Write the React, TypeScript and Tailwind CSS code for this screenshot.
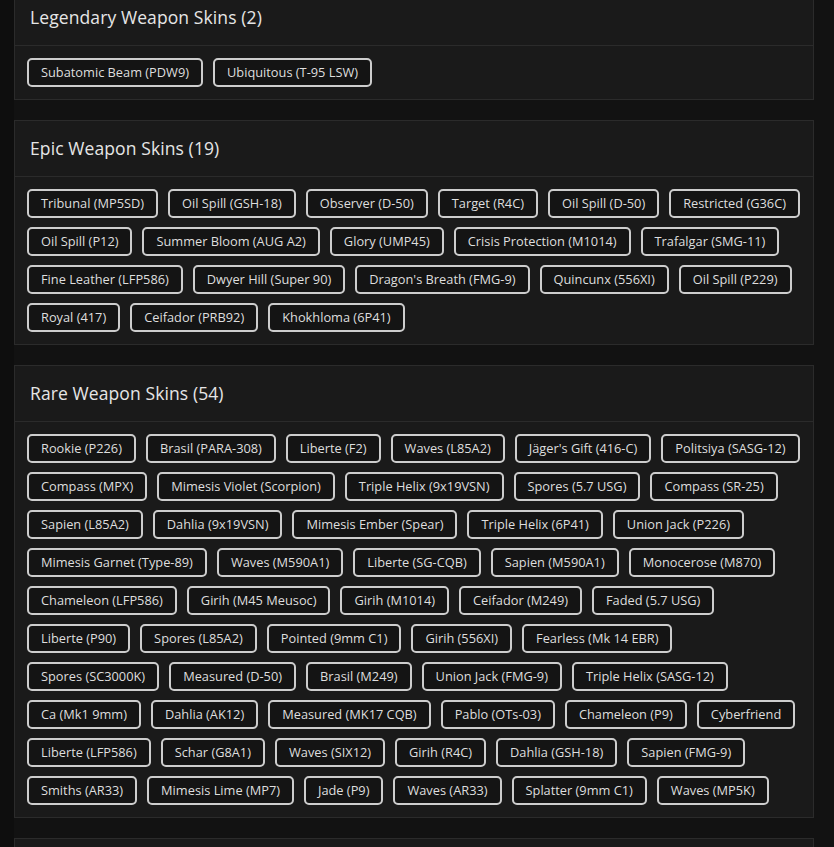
import React from "react";

const legendary = [["Subatomic Beam (PDW9)", "Ubiquitous (T-95 LSW)"]];
const epic = [
  ["Tribunal (MP5SD)", "Oil Spill (GSH-18)", "Observer (D-50)", "Target (R4C)", "Oil Spill (D-50)", "Restricted (G36C)"],
  ["Oil Spill (P12)", "Summer Bloom (AUG A2)", "Glory (UMP45)", "Crisis Protection (M1014)", "Trafalgar (SMG-11)"],
  ["Fine Leather (LFP586)", "Dwyer Hill (Super 90)", "Dragon's Breath (FMG-9)", "Quincunx (556XI)", "Oil Spill (P229)"],
  ["Royal (417)", "Ceifador (PRB92)", "Khokhloma (6P41)"],
];
const rare = [
  ["Rookie (P226)", "Brasil (PARA-308)", "Liberte (F2)", "Waves (L85A2)", "Jäger's Gift (416-C)", "Politsiya (SASG-12)"],
  ["Compass (MPX)", "Mimesis Violet (Scorpion)", "Triple Helix (9x19VSN)", "Spores (5.7 USG)", "Compass (SR-25)"],
  ["Sapien (L85A2)", "Dahlia (9x19VSN)", "Mimesis Ember (Spear)", "Triple Helix (6P41)", "Union Jack (P226)"],
  ["Mimesis Garnet (Type-89)", "Waves (M590A1)", "Liberte (SG-CQB)", "Sapien (M590A1)", "Monocerose (M870)"],
  ["Chameleon (LFP586)", "Girih (M45 Meusoc)", "Girih (M1014)", "Ceifador (M249)", "Faded (5.7 USG)"],
  ["Liberte (P90)", "Spores (L85A2)", "Pointed (9mm C1)", "Girih (556XI)", "Fearless (Mk 14 EBR)"],
  ["Spores (SC3000K)", "Measured (D-50)", "Brasil (M249)", "Union Jack (FMG-9)", "Triple Helix (SASG-12)"],
  ["Ca (Mk1 9mm)", "Dahlia (AK12)", "Measured (MK17 CQB)", "Pablo (OTs-03)", "Chameleon (P9)", "Cyberfriend"],
  ["Liberte (LFP586)", "Schar (G8A1)", "Waves (SIX12)", "Girih (R4C)", "Dahlia (GSH-18)", "Sapien (FMG-9)"],
  ["Smiths (AR33)", "Mimesis Lime (MP7)", "Jade (P9)", "Waves (AR33)", "Splatter (9mm C1)", "Waves (MP5K)"],
];

function Card({ title, rows }: { title: string; rows: string[][] }) {
  return (
    <section className="border border-[#2b2b2b] bg-[#1a1a1a]">
      <div className="flex h-[56px] items-center border-b border-[#2b2b2b] px-[15px]">
        <h2 className="text-[17.5px] font-medium tracking-[0.1px] text-[#e6e6e6]">{title}</h2>
      </div>
      <div className="flex flex-col gap-[9px] p-3">
        {rows.map((row, i) => (
          <div key={i} className="flex gap-[10px]">
            {row.map((s) => (
              <span
                key={s}
                className="flex h-[29px] items-center whitespace-nowrap rounded-[5px] border-2 border-[#cdcdcd] bg-[#141414] px-3 text-[12.8px] text-[#dedede]"
              >
                {s}
              </span>
            ))}
          </div>
        ))}
      </div>
    </section>
  );
}

export default function App() {
  return (
    <div
      className="h-[847px] overflow-hidden bg-[linear-gradient(to_right,#0e0e0e_14px,#121212_14px)]"
      style={{ fontFamily: '"Open Sans", "Noto Sans", sans-serif' }}
    >
      <div className="-mt-[11px] ml-[14px] flex w-[800px] flex-col gap-[20px]">
        <Card title="Legendary Weapon Skins (2)" rows={legendary} />
        <Card title="Epic Weapon Skins (19)" rows={epic} />
        <Card title="Rare Weapon Skins (54)" rows={rare} />
        <section className="h-[120px] border border-[#2b2b2b] bg-[#1a1a1a]" />
      </div>
    </div>
  );
}
